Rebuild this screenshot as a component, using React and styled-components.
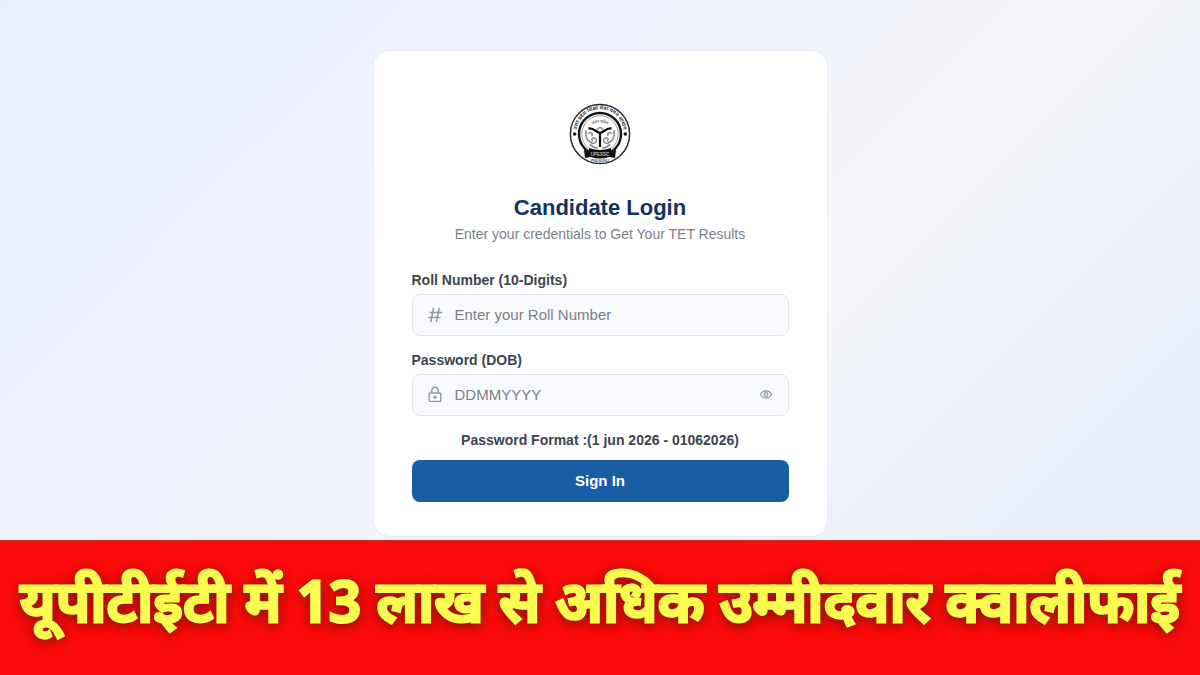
import React, { useState } from "react";
import styled, { createGlobalStyle } from "styled-components";

const GlobalStyle = createGlobalStyle`
  *, *::before, *::after { box-sizing: border-box; }
  body {
    margin: 0;
    background: #fb0c0a;
    font-family: "Liberation Sans", Arial, sans-serif;
  }
`;

const Page = styled.div`
  display: flex;
  flex-direction: column;
  min-height: 100vh;
`;

const Stage = styled.main`
  flex: 1;
  display: flex;
  flex-direction: column;
  align-items: center;
  padding: 50px 16px 3px;
  background: linear-gradient(135deg, #e8f0fe 0%, #f0f3fc 42%, #f6f7fb 64%, #eef2fa 76%, #e6eef8 100%);
`;

const Card = styled.form`
  display: flex;
  flex-direction: column;
  width: 100%;
  max-width: 455px;
  padding: 52px 38px 34px;
  border: 1px solid #e8ebf2;
  border-radius: 16px;
  background: #fff;
`;

const Emblem = styled.svg`
  align-self: center;
  width: 62px;
  height: 62px;
`;

const Title = styled.h1`
  margin: 29px 0 0;
  color: #0f355f;
  font-size: 22px;
  line-height: 28px;
  text-align: center;
`;

const Subtitle = styled.p`
  margin: 2px 0 26px;
  color: #7a7f88;
  font-size: 14px;
  line-height: 20px;
  text-align: center;
`;

const Field = styled.div`
  display: flex;
  flex-direction: column;
  gap: 4px;
  margin-bottom: 14px;
`;

const Label = styled.label`
  color: #3d4450;
  font-size: 14px;
  font-weight: 700;
  line-height: 20px;
`;

const InputBox = styled.div`
  display: flex;
  align-items: center;
  gap: 12px;
  height: 42px;
  padding: 0 14px;
  border: 1px solid #e1e4ea;
  border-radius: 8px;
  background: #f9fafd;
  color: #92969e;
`;

const TextInput = styled.input`
  flex: 1;
  min-width: 0;
  padding: 0;
  border: 0;
  outline: 0;
  background: transparent;
  color: #3d4450;
  font: 15px/20px "Liberation Sans", Arial, sans-serif;
  &::placeholder { color: #7d7f84; opacity: 1; }
`;

const IconButton = styled.button`
  display: flex;
  padding: 0;
  border: 0;
  background: none;
  color: inherit;
  cursor: pointer;
`;

const Hint = styled.p`
  margin: 0 0 10px;
  color: #3d4450;
  font-size: 14px;
  font-weight: 700;
  line-height: 20px;
  text-align: center;
`;

const SubmitButton = styled.button`
  height: 42px;
  border: 0;
  border-radius: 8px;
  background: #195ea4;
  color: #fff;
  font: 700 15px/20px "Liberation Sans", Arial, sans-serif;
  cursor: pointer;
`;

const Banner = styled.footer`
  padding: 18px;
  border-top: 1px solid #c3302f;
  background: #fb0c0a;
`;

const Headline = styled.h2`
  margin: 0;
  color: #fbfd4f;
  font-family: "Noto Sans Devanagari", "Noto Sans", sans-serif;
  font-size: 58px;
  font-weight: 600;
  line-height: 98px;
  text-align: center;
  white-space: nowrap;
  -webkit-text-stroke: 3px #fbfd4f;
  text-shadow: 0 1px 3px #8a1208, 0 2px 8px #8a1208, 0 3px 16px #8a1208;
`;

function SealEmblem() {
  return (
    <Emblem viewBox="0 0 62 62" role="img" aria-label="Commission seal">
      <defs>
        <path id="ring" d="M9.5 39 A23.4 23.4 0 1 1 52.5 39" />
        <path id="inner" d="M18 27 A15 15 0 0 1 44 27" />
      </defs>
      <circle cx="31" cy="31" r="29.6" fill="#fff" stroke="#2b2b2b" strokeWidth="1.5" />
      <circle cx="31" cy="31" r="21" fill="#fff" stroke="#151515" strokeWidth="2.4" />
      <circle cx="31" cy="31" r="18.2" fill="none" stroke="#777" strokeWidth="0.7" />
      <g fill="#3a3a3a" fontFamily="Noto Sans Devanagari, Noto Sans, sans-serif" fontWeight="700">
        <text fontSize="5">
          <textPath href="#ring" startOffset="50%" textAnchor="middle">उत्तर प्रदेश शिक्षा सेवा चयन आयोग</textPath>
        </text>
        <text fontSize="4" fill="#777">
          <textPath href="#inner" startOffset="50%" textAnchor="middle">उत्तर प्रदेश</textPath>
        </text>
      </g>
      <circle cx="5.7" cy="31" r="1.8" fill="#151515" />
      <circle cx="56.3" cy="31" r="1.8" fill="#151515" />
      <g fill="none" stroke="#8b8b8b" strokeWidth="1.5">
        <path d="M17 27c-1 6 1 11 6 13 4 1 6-3 3-5-3-1-4 2-2 3M19 31c2-3 5-1 4 2M21 41c2 3 5 4 8 4" />
        <path d="M45 27c1 6-1 11-6 13-4 1-6-3-3-5 3-1 4 2 2 3M43 31c-2-3-5-1-4 2M41 41c-2 3-5 4-8 4" />
        <path d="M28 27q3-5 6 0" />
      </g>
      <path d="M19.5 25.5c5-1 8 4 11.5 4.5 3.5-.5 6.5-5.5 11.5-4.5M31 30v14" fill="none" stroke="#111" strokeWidth="2.3" />
      <path d="M15 47l5 1v-3q11 4 22 0v3l5-1-1 8-6-1q-9 3-18 0l-6 1z" fill="#111" />
      <text x="31" y="52.6" fontSize="4.5" fontWeight="700" textAnchor="middle" fill="#bbb">UPESSC</text>
      <text x="31" y="59" fontSize="3" fontWeight="700" textAnchor="middle" fill="#555">PRAYAGRAJ</text>
    </Emblem>
  );
}

const HashIcon = () => (
  <svg width="16" height="16" viewBox="0 0 16 16" fill="none" stroke="currentColor" strokeWidth="1.5" aria-hidden="true">
    <path d="M6.6 1 3.8 15M12.2 1 9.4 15M2.6 5.5h12.4M1.2 10.5h12.4" />
  </svg>
);

const LockIcon = () => (
  <svg width="16" height="18" viewBox="0 0 16 18" fill="none" stroke="currentColor" strokeWidth="1.4" aria-hidden="true">
    <rect x="2.2" y="7" width="11.6" height="8.4" rx="1.2" />
    <path d="M4.8 7V4.4a3.2 3.2 0 0 1 6.4 0v2.6" />
    <path d="M8 9.4v3.6M6.2 11.2h3.6" />
  </svg>
);

const EyeIcon = () => (
  <svg width="16" height="16" viewBox="0 0 16 16" fill="none" stroke="currentColor" strokeWidth="1.2" aria-hidden="true">
    <path d="M2.4 7.5C4.8 2.7 11.2 2.7 13.6 7.5 11.2 11.9 4.8 11.9 2.4 7.5Z" />
    <circle cx="8" cy="7.5" r="1.8" />
  </svg>
);

export default function App() {
  const [shown, setShown] = useState(true);
  return (
    <Page>
      <GlobalStyle />
      <Stage>
        <Card onSubmit={(e) => e.preventDefault()}>
          <SealEmblem />
          <Title>Candidate Login</Title>
          <Subtitle>Enter your credentials to Get Your TET Results</Subtitle>
          <Field>
            <Label htmlFor="roll">Roll Number (10-Digits)</Label>
            <InputBox>
              <HashIcon />
              <TextInput id="roll" placeholder="Enter your Roll Number" inputMode="numeric" />
            </InputBox>
          </Field>
          <Field>
            <Label htmlFor="dob">Password (DOB)</Label>
            <InputBox>
              <LockIcon />
              <TextInput id="dob" type={shown ? "text" : "password"} placeholder="DDMMYYYY" />
              <IconButton type="button" aria-label="Toggle password visibility" onClick={() => setShown(!shown)}>
                <EyeIcon />
              </IconButton>
            </InputBox>
          </Field>
          <Hint>Password Format :(1 jun 2026 - 01062026)</Hint>
          <SubmitButton type="submit">Sign In</SubmitButton>
        </Card>
      </Stage>
      <Banner>
        <Headline lang="hi">यूपीटीईटी में 13 लाख से अधिक उम्मीदवार क्वालीफाई</Headline>
      </Banner>
    </Page>
  );
}
